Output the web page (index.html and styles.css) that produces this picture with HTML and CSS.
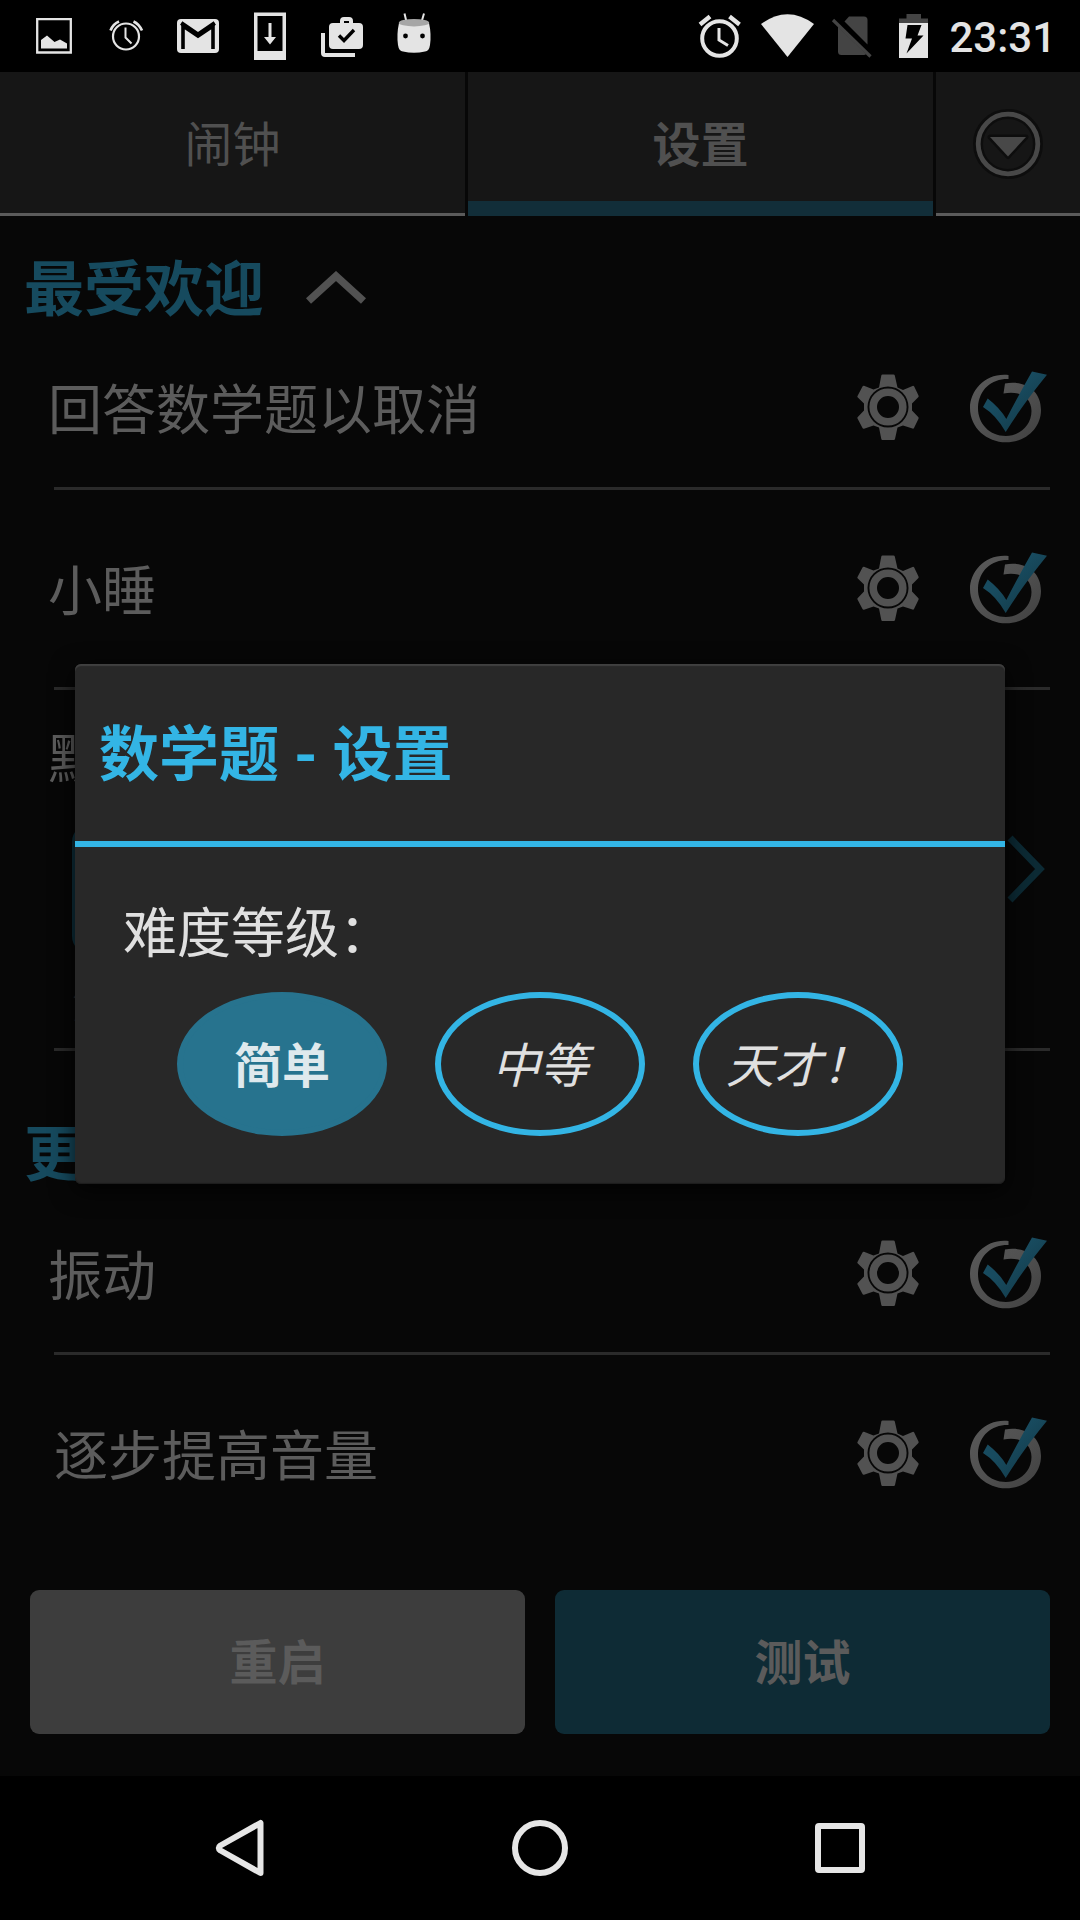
FILE: index.html
```html
<!DOCTYPE html>
<html lang="zh-CN">
<head>
    <meta charset="UTF-8">
    <meta name="viewport" content="width=device-width, initial-scale=1.0">
    <title>闹钟设置</title>
    <link rel="stylesheet" href="styles.css">
</head>
<body>
    <!-- Shared icons -->
    <svg class="sprite" width="0" height="0">
        <defs>
            <linearGradient id="ring-shade" x1="0" y1="0" x2="1" y2="1">
                <stop offset="0" stop-color="#5a5a5a"/>
                <stop offset="0.5" stop-color="#505050"/>
                <stop offset="1" stop-color="#404040"/>
            </linearGradient>
            <linearGradient id="tick-shade" x1="0" y1="0" x2="1" y2="1">
                <stop offset="0.4" stop-color="#184b5f"/>
                <stop offset="1" stop-color="#113542"/>
            </linearGradient>
        </defs>
        <symbol id="gear" viewBox="0 0 62 66">
            <path fill="#525252" fill-rule="evenodd" d="M25.500 0.500H36.500Q37.500 0.500 37.800 1.600L40.500 13.500L46 16L55.500 12Q56.500 11.500 57.200 12.500L61.500 21.500Q62 22.500 61.200 23.200L55 29.500V36.500L61.200 43Q62 43.800 61.500 44.700L57 54Q56.500 55 55.500 54.600L46 51.500L40.500 53.500L38 65Q37.800 66 36.800 66H25.500Q24.500 66 24.300 65L22 53.500L16.500 51.500L7 54.700Q6 55 5.500 54L0.500 44.500Q0 43.700 0.800 43L7 36.500V29.500L0.800 23.500Q0 22.800 0.500 22L5.500 12.500Q6 11.500 7 11.800L16.500 15.500L22 13.500L24.300 1.600Q24.500 0.500 25.500 0.500ZM31 12.500A20.500 20.500 0 1 0 31 53.500A20.500 20.500 0 1 0 31 12.500Z"/>
            <circle cx="31" cy="33" r="14.800" fill="none" stroke="#525252" stroke-width="7.600"/>
        </symbol>
        <symbol id="check" viewBox="0 0 80 76">
            <path fill="url(#ring-shade)" d="M38.500 4C16 1.500 0 19 0 37C0 57 17 71.300 36 71.300C56 71.300 71 57 71 39C71 20 56 9 35 12.500L33.500 22.500C50 19 61.500 27 61.500 40C61.500 54 50 65 36 65C19 65 7.500 52 8 36C9 18 22 7.500 38.500 8Z"/>
            <path fill="url(#tick-shade)" d="M17.700 27.500L13 36Q26 44 35.700 61Q53 33 77 3.700L62 0.500Q47 27 36.300 48Q30 37 17.700 27.500Z"/>
        </symbol>
    </svg>

    <div class="status-bar">
        <div class="notifications">
            <svg width="440" height="72" viewBox="0 0 440 72">
                <!-- picture -->
                <path d="M37.200 19.200H70.800V52.500H37.200Z" fill="none" stroke="#e4e4e4" stroke-width="2.300"/>
                <path d="M41 48.500V40L47 35.500L54.500 42L60 39.500L67 43.500V48.500Z"/>
                <!-- alarm -->
                <g fill="none" stroke="#e4e4e4">
                    <circle cx="126" cy="36.500" r="13" stroke-width="2.200"/>
                    <path d="M125.500 27.500V37.500L131.500 43.500" stroke-width="2"/>
                    <path d="M110.500 30.500Q113 24 119 21.500M133.500 21.500Q139 24 142 30.500" stroke-width="2.600"/>
                </g>
                <!-- mail -->
                <rect x="177" y="19" width="42" height="34" rx="4"/>
                <path d="M183 49V26L198 36L213 26V49" fill="none" stroke="#000" stroke-width="3.600"/>
                <path d="M181.200 23L198 34.500L214.800 23" fill="none" stroke="#000" stroke-width="4"/>
                <!-- system update -->
                <path fill-rule="evenodd" d="M254 12.500H286V60H254ZM257.500 16V51H282.500V16Z"/>
                <path d="M268.500 23H271.500V37H276L270 44.500L264 37H268.500Z"/>
                <!-- work done -->
                <path fill-rule="evenodd" d="M333 23H340V21Q340 17 344 17H349Q353 17 353 21V23H359Q363 23 363 27V45Q363 49 359 49H333Q329 49 329 45V27Q329 23 333 23ZM344 23H349V21H344Z"/>
                <path d="M339 35.500L344 40.500L354 30" fill="none" stroke="#000" stroke-width="3.400"/>
                <path d="M321 33H325V53H355V57H325Q321 57 321 53Z"/>
                <!-- droid head -->
                <path d="M404.500 13.500L406.500 22M424 13.500L421.500 22" fill="none" stroke="#e4e4e4" stroke-width="2"/>
                <path d="M399 23Q396.500 34 398 45Q398.800 51 403 51.500Q414 54 425 51.500Q429.200 51 430 45Q431.500 34 429 23Z"/>
                <ellipse cx="414" cy="22.700" rx="15.200" ry="3.700" fill="#a6a6a6"/>
                <circle cx="405.500" cy="36" r="2.400" fill="#000"/>
                <circle cx="422.500" cy="36" r="2.400" fill="#000"/>
            </svg>
        </div>
        <div class="system-icons">
            <svg width="240" height="72" viewBox="695 0 240 72">
                <!-- alarm set -->
                <g fill="none" stroke="#e4e4e4">
                    <circle cx="719.500" cy="38.500" r="17.300" stroke-width="4"/>
                    <path d="M719 28V40L728 45.500" stroke-width="3"/>
                    <path d="M700 24.500L710 16.500M729.500 16.500L739.500 24.500" stroke-width="4.400"/>
                </g>
                <!-- wifi -->
                <path d="M761 24Q787.500 4.500 814 24L787.500 57Z"/>
                <!-- no sim -->
                <path fill="#444" d="M844.500 21.500L849 16.500H864Q867.500 16.500 867.500 20V44.500ZM838 26.500L866 54Q865.500 55 864 55H841.500Q838 55 838 51.500Z"/>
                <path d="M833 20L870.500 56.500" stroke="#444" stroke-width="3.200"/>
                <!-- battery charging -->
                <path fill="#444" d="M899 18.500H906.500V14H921V18.500H928V24H899Z"/>
                <path d="M899 23H928V58H899Z"/>
                <path fill="#000" d="M907.500 25H921.500L917.500 35.500H923.500L906.500 53.500L912 38.500H905.500Z"/>
            </svg>
            <span class="clock">23:31</span>
        </div>
    </div>

    <div class="app">
        <div class="tabs">
            <div class="tab">闹钟</div>
            <div class="tab active">设置</div>
            <div class="tab more">
                <svg width="72" height="72" viewBox="-36 -36 72 72">
                    <circle r="30" fill="none" stroke="#0d0d0d" stroke-width="10"/>
                    <circle r="29.800" fill="none" stroke="#484848" stroke-width="4.800"/>
                    <path d="M-18 -7H18L0 12.500Z" fill="#484848" stroke="#0d0d0d" stroke-width="5" stroke-linejoin="round" paint-order="stroke"/>
                </svg>
            </div>
        </div>

        <div class="section-title popular">
            <span>最受欢迎</span>
            <svg width="60" height="34" viewBox="0 0 60 34">
                <path d="M2.500 30L30 5L57.500 30" fill="none" stroke="#525252" stroke-width="7.500"/>
            </svg>
        </div>

        <div class="row first">
            <span class="label">回答数学题以取消</span>
            <svg class="gear"><use href="#gear"/></svg>
            <svg class="check"><use href="#check"/></svg>
        </div>
        <div class="row snooze">
            <span class="label">小睡</span>
            <svg class="gear"><use href="#gear"/></svg>
            <svg class="check"><use href="#check"/></svg>
        </div>
        <div class="sound">
            <div class="label">默认</div>
            <div class="sound-picker">
                <div class="sound-box"></div>
                <svg class="next" width="38" height="68" viewBox="0 0 38 68">
                    <path d="M3 3L33 34L3 65" fill="none" stroke="#0c2a34" stroke-width="7"/>
                </svg>
            </div>
            <div class="hint">添加</div>
        </div>

        <div class="section-title other">更多</div>

        <div class="row vibrate">
            <span class="label">振动</span>
            <svg class="gear"><use href="#gear"/></svg>
            <svg class="check"><use href="#check"/></svg>
        </div>
        <div class="row volume">
            <span class="label">逐步提高音量</span>
            <svg class="gear"><use href="#gear"/></svg>
            <svg class="check"><use href="#check"/></svg>
        </div>

        <div class="actions">
            <button class="reset">重启</button>
            <button class="test">测试</button>
        </div>
    </div>

    <div class="nav-bar">
        <svg width="60" height="60" viewBox="-30 -30 60 60">
            <path d="M20.500 -25V25L-19.500 2.500Q-23 0 -19.500 -2.500Z"/>
        </svg>
        <svg width="60" height="60" viewBox="-30 -30 60 60">
            <circle r="25"/>
        </svg>
        <svg width="60" height="60" viewBox="-30 -30 60 60">
            <rect x="-22" y="-22" width="44" height="44" rx="1"/>
        </svg>
    </div>

    <div class="dialog">
        <h2>数学题 - 设置</h2>
        <div class="dialog-body">
            <p>难度等级：</p>
            <div class="levels">
                <div class="level selected">简单</div>
                <div class="level">中等</div>
                <div class="level">天才！</div>
            </div>
        </div>
    </div>
</body>
</html>
```
FILE: styles.css
```css
* {
    box-sizing: border-box;
}
body {
    margin: 0;
    width: 1080px;
    height: 1920px;
    position: relative;
    overflow: hidden;
    display: flex;
    flex-direction: column;
    background-color: #000;
    font-family: Roboto, "Noto Sans CJK SC", sans-serif;
}
svg {
    display: block;
    flex: none;
}
.sprite {
    position: absolute;
}

/* status bar */
.status-bar {
    height: 72px;
    display: flex;
    justify-content: space-between;
    fill: #e4e4e4;
}
.system-icons {
    display: flex;
    padding-right: 24px;
}
.clock {
    margin-left: 14px;
    line-height: 76px;
    font-size: 42px;
    font-weight: 500;
    color: #e4e4e4;
}

/* main screen */
.app {
    height: 1704px;
    background-color: #070707;
    color: #5c5c5c;
}
.tabs {
    display: grid;
    grid-template-columns: 465px 465px 144px;
    gap: 3px;
    height: 144px;
}
.tab {
    display: flex;
    align-items: center;
    justify-content: center;
    padding-top: 7px;
    background-color: #161616;
    border-bottom: 3px solid #5b5b5b;
    font-size: 48px;
    line-height: 60px;
    color: #505050;
}
.tab.active {
    padding-top: 19px;
    border-bottom: 15px solid #122e39;
    font-weight: bold;
}
.tab.more {
    padding-top: 3px;
}
.section-title {
    display: flex;
    align-items: center;
    padding-left: 24px;
    font-size: 60px;
    font-weight: bold;
    color: #164a5e;
}
.popular {
    height: 144px;
    gap: 42px;
}
.popular span {
    margin-bottom: 8px;
}
.other {
    height: 201px;
    padding-bottom: 5px;
}
.row {
    display: flex;
    align-items: center;
    height: 180px;
    margin: 0 30px 0 54px;
}
.label {
    font-size: 54px;
    line-height: 78px;
}
.row .label {
    flex: 1;
    margin: 9px 0 0 -6px;
}
.row.volume .label {
    margin-left: 0;
}
.gear {
    width: 62px;
    height: 66px;
}
.check {
    width: 80px;
    height: 76px;
    margin: 4px 0 0 51px;
}
.first {
    height: 130px;
    padding-bottom: 33px;
    border-bottom: 3px solid #2a2a2a;
}
.snooze {
    height: 200px;
    padding-bottom: 1px;
    border-bottom: 3px solid #2a2a2a;
}
.sound {
    height: 361px;
    margin: 0 30px 0 54px;
    padding-top: 32px;
    border-bottom: 3px solid #2a2a2a;
}
.sound .label {
    margin-left: -6px;
}
.sound-picker {
    display: flex;
    align-items: center;
    justify-content: space-between;
    height: 130px;
    margin: 24px 5px 0 18px;
}
.sound-box {
    width: 870px;
    height: 130px;
    border: 6px solid #0e303c;
    border-radius: 18px;
}
.next {
    margin-bottom: 41px;
}
.hint {
    margin: 21px 0 0 18px;
    font-size: 42px;
    line-height: 60px;
    color: #2a2a2a;
}
.vibrate {
    height: 103px;
    padding-bottom: 58px;
    border-bottom: 3px solid #2a2a2a;
}
.volume {
    height: 196px;
}
.actions {
    display: grid;
    grid-template-columns: 1fr 1fr;
    gap: 30px;
    margin: 39px 30px 0;
}
button {
    height: 144px;
    padding: 0 0 6px;
    border: 0;
    border-radius: 9px;
    font-family: inherit;
    font-size: 48px;
    font-weight: bold;
    color: #5b5b5b;
}
.reset {
    background-color: #3d3d3d;
}
.test {
    background-color: #0e2b35;
}

/* navigation bar */
.nav-bar {
    height: 144px;
    display: flex;
    align-items: center;
    justify-content: center;
    gap: 240px;
    fill: none;
    stroke: #e6e6e6;
    stroke-width: 6px;
    stroke-linejoin: round;
}

/* dialog */
.dialog {
    position: absolute;
    left: 75px;
    top: 664px;
    width: 930px;
    height: 520px;
    border-radius: 6px;
    background-color: #282828;
    box-shadow: inset 0 2px 1px #404040, inset 0 -1px 1px #1c1c1c, 0 6px 24px rgba(0, 0, 0, 0.8);
    color: #e0e0e0;
}
.dialog h2 {
    height: 183px;
    margin: 0;
    padding-left: 24px;
    border-bottom: 6px solid #33b5e5;
    font-size: 60px;
    line-height: 183px;
    color: #33b5e5;
}
.dialog-body {
    padding: 49px 102px 0;
}
.dialog p {
    margin: 0 0 18px -54px;
    font-size: 54px;
    line-height: 78px;
}
.levels {
    display: flex;
    gap: 48px;
}
.level {
    width: 210px;
    height: 144px;
    border: 6px solid #33b5e5;
    border-radius: 50%;
    font-size: 48px;
    font-style: italic;
    line-height: 137px;
    text-align: center;
}
.level.selected {
    border-color: #27738e;
    background-color: #27738e;
    font-style: normal;
    font-weight: bold;
    color: #dfe9ed;
}
```
